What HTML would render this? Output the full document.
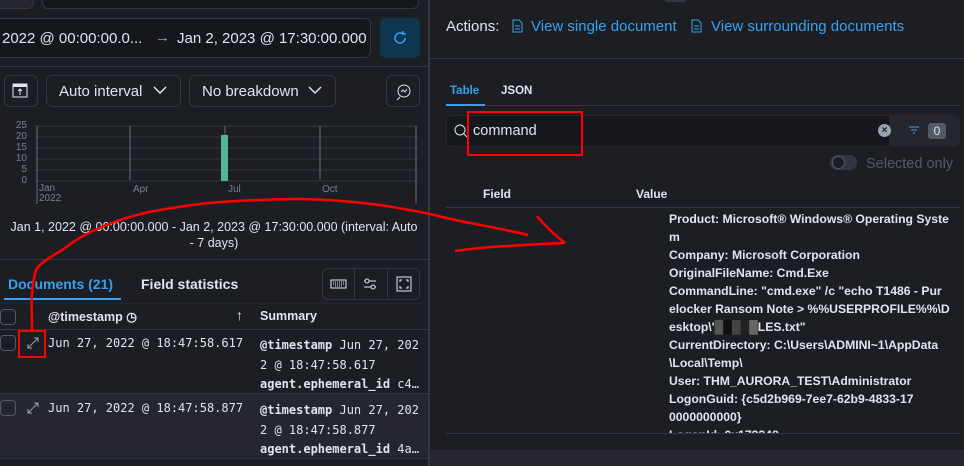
<!DOCTYPE html>
<html><head><meta charset="utf-8"><style>
*{margin:0;padding:0;box-sizing:border-box}
body{width:964px;height:466px;overflow:hidden;background:#1d1e24;font-family:"Liberation Sans",sans-serif;color:#dfe5ef;position:relative}
.a{position:absolute}
.box{position:absolute;border:1px solid #343741;border-radius:6px;background:#1d1e24}
.mono{font-family:"DejaVu Sans Mono","Liberation Mono",monospace}
.b{font-weight:bold}
</style></head><body>
<div class="box" style="left:-10px;top:-10px;width:44px;height:19px;background:#25262e"></div>
<div class="box" style="left:42px;top:-10px;width:377px;height:19px;background:#16171c"></div>
<div class="box" style="left:-10px;top:18px;width:381px;height:40px;background:#16171c"></div>
<div class="a" style="left:2px;top:30px;font-size:15px;color:#dfe5ef">2022 @ 00:00:00.0...</div>
<div class="a" style="left:155px;top:29px;font-size:15px;color:#98a2b3">→</div>
<div class="a" style="left:177px;top:30px;font-size:15px">Jan 2, 2023 @ 17:30:00.000</div>
<div class="a" style="left:380px;top:18px;width:40px;height:40px;background:#0f3650;border-radius:6px"></div>
<svg class="a" style="left:391px;top:29px" width="18" height="18" viewBox="0 0 18 18"><path d="M14 9a5 5 0 1 1-2-4M12 2v3h3" stroke="#36a2ef" stroke-width="1.5" fill="none"/></svg>
<div class="a" style="left:0;top:66px;width:428px;height:1px;background:#343741"></div>
<div class="box" style="left:4px;top:75px;width:34px;height:32px"></div>
<svg class="a" style="left:12px;top:83px" width="18" height="16"><rect x="1" y="1" width="14" height="13" fill="none" stroke="#dfe5ef"/><rect x="1" y="1" width="14" height="3" fill="#dfe5ef"/><path d="M8 12V6M6 8l2-2 2 2" stroke="#dfe5ef" fill="none"/></svg>
<div class="box" style="left:46px;top:75px;width:135px;height:32px"></div>
<div class="a" style="left:59px;top:83px;font-size:15px">Auto interval</div>
<svg class="a" style="left:153px;top:86px" width="14" height="9"><path d="M1 1l6 6 6-6" stroke="#dfe5ef" stroke-width="1.5" fill="none"/></svg>
<div class="box" style="left:189px;top:75px;width:147px;height:32px"></div>
<div class="a" style="left:202px;top:83px;font-size:15px">No breakdown</div>
<svg class="a" style="left:308px;top:86px" width="14" height="9"><path d="M1 1l6 6 6-6" stroke="#dfe5ef" stroke-width="1.5" fill="none"/></svg>
<div class="box" style="left:386px;top:75px;width:34px;height:32px"></div>
<svg class="a" style="left:395px;top:83px" width="18" height="18"><circle cx="9" cy="8" r="6" fill="none" stroke="#dfe5ef"/><path d="M5 14l-3 3M6 9l2-2 2 2 2-3" stroke="#dfe5ef" fill="none"/></svg>
<div class="a" style="left:10px;top:120px;font-size:10px;line-height:11px;color:#7a808c;text-align:right;width:17px">25<br>20<br>15<br>10<br>5<br>0</div>
<svg class="a" style="left:36px;top:124px" width="384" height="80">
<g stroke="#343741"><line x1="0" y1="2" x2="382" y2="2"/><line x1="0" y1="13" x2="382" y2="13"/><line x1="0" y1="24" x2="382" y2="24"/><line x1="0" y1="35" x2="382" y2="35"/><line x1="0" y1="46" x2="382" y2="46"/><line x1="0" y1="57" x2="382" y2="57"/></g>
<g stroke="#6a6f7a"><line x1="1" y1="2" x2="1" y2="80"/><line x1="94" y1="2" x2="94" y2="56"/><line x1="189" y1="2" x2="189" y2="56"/><line x1="284" y1="2" x2="284" y2="56"/><line x1="380" y1="2" x2="380" y2="80"/></g>
<rect x="185" y="11" width="7" height="46" fill="#54b399"/>
</svg>
<div class="a" style="left:39px;top:184px;font-size:10px;line-height:10px;color:#7a808c">Jan<br>2022</div>
<div class="a" style="left:133px;top:184px;font-size:10px;color:#7a808c">Apr</div>
<div class="a" style="left:228px;top:184px;font-size:10px;color:#7a808c">Jul</div>
<div class="a" style="left:322px;top:184px;font-size:10px;color:#7a808c">Oct</div>
<div class="a" style="left:0;top:219px;width:428px;text-align:center;font-size:12.5px;line-height:16px">Jan 1, 2022 @ 00:00:00.000 - Jan 2, 2023 @ 17:30:00.000 (interval: Auto<br>- 7 days)</div>
<div class="a" style="left:0;top:259px;width:428px;height:1px;background:#343741"></div>
<div class="a b" style="left:8px;top:276px;font-size:14px;color:#36a2ef">Documents (21)</div>
<div class="a" style="left:4px;top:298px;width:117px;height:2px;background:#36a2ef"></div>
<div class="a b" style="left:141px;top:276px;font-size:14px">Field statistics</div>
<div class="box" style="left:322px;top:268px;width:98px;height:32px"></div>
<div class="a" style="left:354px;top:268px;width:1px;height:32px;background:#343741"></div>
<div class="a" style="left:387px;top:268px;width:1px;height:32px;background:#343741"></div>
<svg class="a" style="left:330px;top:276px" width="84" height="16"><rect x="1" y="4" width="15" height="8" fill="none" stroke="#dfe5ef"/><path d="M3 6h11M3 8h11M5 10h7" stroke="#dfe5ef" stroke-dasharray="1 1"/><path d="M34 5h12M34 11h12" stroke="#dfe5ef"/><circle cx="37" cy="5" r="2" fill="#1d1e24" stroke="#dfe5ef"/><circle cx="43" cy="11" r="2" fill="#1d1e24" stroke="#dfe5ef"/><rect x="67" y="1" width="14" height="14" fill="none" stroke="#dfe5ef"/><path d="M70 6V4h2M78 6V4h-2M70 10v2h2M78 10v2h-2" stroke="#dfe5ef" fill="none"/></svg>
<div class="a" style="left:0;top:303px;width:428px;height:1px;background:#25262e"></div>
<div class="a" style="left:0;top:309px;width:16px;height:16px;border:1px solid #535966;border-radius:4px"></div>
<div class="a b" style="left:48px;top:309px;font-size:12.5px">@timestamp ◷</div>
<div class="a" style="left:236px;top:307px;font-size:14px">↑</div>
<div class="a b" style="left:260px;top:309px;font-size:12.5px">Summary</div>
<div class="a" style="left:0;top:329px;width:428px;height:1px;background:#343741"></div>
<div class="a" style="left:0;top:394px;width:428px;height:64px;background:#25262e"></div>
<div class="a" style="left:0;top:393px;width:428px;height:1px;background:#343741"></div>
<div class="a" style="left:0;top:458px;width:428px;height:1px;background:#343741"></div>
<div class="a" style="left:0;top:335px;width:16px;height:16px;border:1px solid #535966;border-radius:4px"></div>
<div class="a" style="left:0;top:400px;width:16px;height:16px;border:1px solid #535966;border-radius:4px"></div>
<svg class="a" style="left:26px;top:336px" width="14" height="14"><path d="M2 12L12 2M8 2h4v4M2 8v4h4" stroke="#98a2b3" fill="none"/></svg>
<svg class="a" style="left:26px;top:401px" width="14" height="14"><path d="M2 12L12 2M8 2h4v4M2 8v4h4" stroke="#98a2b3" fill="none"/></svg>
<div class="a mono" style="left:48px;top:336px;font-size:12px">Jun 27, 2022 @ 18:47:58.617</div>
<div class="a mono" style="left:48px;top:401px;font-size:12px">Jun 27, 2022 @ 18:47:58.877</div>
<div class="a mono" style="left:260px;top:336px;font-size:12px;line-height:19.5px;width:168px;overflow:hidden;white-space:nowrap"><b>@timestamp</b> Jun 27, 202<br>2 @ 18:47:58.617<br><b>agent.ephemeral_id</b> c4…</div>
<div class="a mono" style="left:260px;top:401px;font-size:12px;line-height:19.5px;width:168px;overflow:hidden;white-space:nowrap"><b>@timestamp</b> Jun 27, 202<br>2 @ 18:47:58.877<br><b>agent.ephemeral_id</b> 4a…</div>
<div class="a" style="left:428px;top:0;width:2px;height:466px;background:#343741"></div>
<div class="a" style="left:664px;top:-4px;width:22px;height:6px;background:#343741;border-radius:3px"></div>
<div class="a" style="left:446px;top:18px;font-size:15px">Actions:</div>
<svg class="a" style="left:510px;top:19px" width="14" height="14"><path d="M3 1h6l3 3v9H3z M5 7h5M5 10h5" stroke="#36a2ef" fill="none"/></svg>
<div class="a" style="left:531px;top:18px;font-size:15px;color:#36a2ef">View single document</div>
<svg class="a" style="left:689px;top:19px" width="14" height="14"><path d="M3 1h6l3 3v9H3z M5 7h5M5 10h5" stroke="#36a2ef" fill="none"/></svg>
<div class="a" style="left:711px;top:18px;font-size:15px;color:#36a2ef">View surrounding documents</div>
<div class="a" style="left:430px;top:58px;width:534px;height:1px;background:#343741"></div>
<div class="a b" style="left:450px;top:85px;font-size:11.5px;color:#36a2ef">Table</div>
<div class="a b" style="left:501px;top:85px;font-size:11.5px">JSON</div>
<div class="a" style="left:446px;top:105px;width:514px;height:1px;background:#343741"></div>
<div class="a" style="left:446px;top:104px;width:39px;height:2px;background:#36a2ef"></div>
<div class="a" style="left:446px;top:115px;width:514px;height:32px;background:#16171c;border:1px solid #25262e;border-radius:5px"></div>
<div class="a" style="left:889px;top:116px;width:70px;height:30px;background:#25262e"></div>
<svg class="a" style="left:453px;top:123px" width="16" height="16"><circle cx="7" cy="7" r="5" stroke="#dfe5ef" fill="none"/><path d="M11 11l3 3" stroke="#dfe5ef"/></svg>
<div class="a" style="left:473px;top:123px;font-size:14.5px">command</div>
<div class="a" style="left:878px;top:124px;width:13px;height:13px;border-radius:50%;background:#98a2b3;color:#1d1e24;font-size:10px;line-height:13px;text-align:center;font-weight:bold">×</div>
<svg class="a" style="left:908px;top:125px" width="12" height="10"><path d="M1 2h10M3 5h6M5 8h2" stroke="#36a2ef"/></svg>
<div class="a" style="left:928px;top:123px;width:18px;height:16px;background:#535966;border-radius:3px;color:#dfe5ef;font-size:12px;text-align:center;line-height:16px">0</div>
<div class="a" style="left:830px;top:155px;width:27px;height:15px;border-radius:8px;background:#343741"></div>
<div class="a" style="left:832px;top:156px;width:13px;height:13px;border-radius:50%;border:1px solid #535966;background:#1d1e24"></div>
<div class="a" style="left:866px;top:156px;font-size:14.5px;color:#535966">Selected only</div>
<div class="a b" style="left:483px;top:187px;font-size:12px">Field</div>
<div class="a b" style="left:636px;top:187px;font-size:12px">Value</div>
<div class="a" style="left:446px;top:207px;width:514px;height:1px;background:#343741"></div>
<div class="a b" style="left:669px;top:210px;width:290px;height:224px;overflow:hidden;font-size:12.2px;line-height:18px;white-space:nowrap">Product: Microsoft® Windows® Operating Syste<br>m<br>Company: Microsoft Corporation<br>OriginalFileName: Cmd.Exe<br>CommandLine: "cmd.exe" /c "echo T1486 - Pur<br>elocker Ransom Note &gt; %%USERPROFILE%%\D<br>esktop\'<span style="color:#555">&#9608;</span><span style="color:#111">&#9608;</span><span style="color:#444">&#9608;</span><span style="color:#222">&#9608;</span><span style="color:#666">&#9608;</span>LES.txt"<br>CurrentDirectory: C:\Users\ADMINI~1\AppData<br>\Local\Temp\<br>User: THM_AURORA_TEST\Administrator<br>LogonGuid: {c5d2b969-7ee7-62b9-4833-17<br>0000000000}<br>LogonId: 0x173348</div>
<div class="a" style="left:446px;top:433px;width:514px;height:1px;background:#343741"></div>
<div class="a" style="left:430px;top:450px;width:534px;height:16px;background:#25262e"></div>
<div class="a" style="left:467px;top:111px;width:116px;height:45px;border:2px solid #f00"></div>
<div class="a" style="left:18px;top:330px;width:28px;height:28px;border:2px solid #f00"></div>
<svg class="a" style="left:0;top:0" width="964" height="466"><path d="M32 331C32 310 30 290 36 270 40 262 55 255 65 248 90 228 130 215 160 210 190 205 215 200 300 199 360 200 400 208 430 214 460 222 490 226 528 235M455 251C480 247 520 245 565 243M537 216C545 226 555 235 565 243" stroke="#f00" stroke-width="2.5" fill="none"/></svg>
</body></html>
